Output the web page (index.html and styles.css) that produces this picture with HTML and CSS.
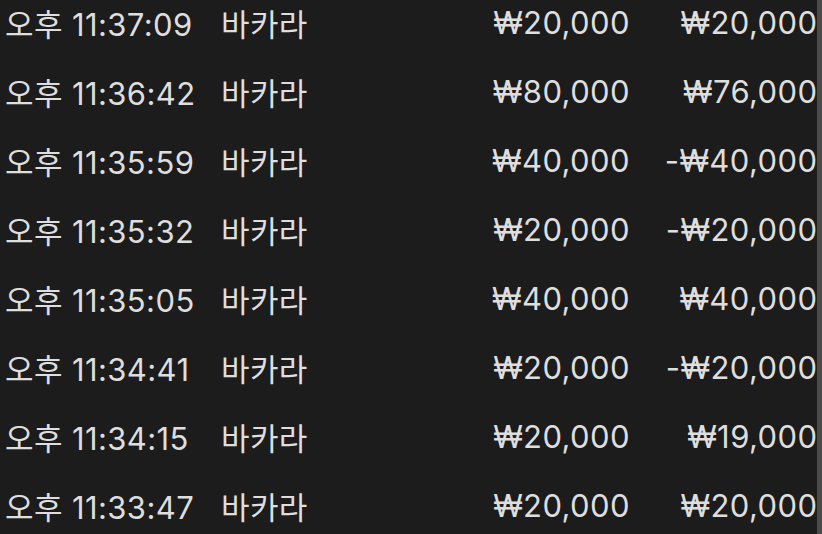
FILE: index.html
```html
<!DOCTYPE html>
<html lang="ko">
<head>
<meta charset="utf-8">
<link rel="stylesheet" href="styles.css">
</head>
<body>
<div class="screen">
  <div class="list">
    <div class="row"><span class="time">오후 11:37:09</span><span class="game">바카라</span><span class="bet">₩20,000</span><span class="win">₩20,000</span></div>
    <div class="row"><span class="time">오후 11:36:42</span><span class="game">바카라</span><span class="bet">₩80,000</span><span class="win">₩76,000</span></div>
    <div class="row"><span class="time">오후 11:35:59</span><span class="game">바카라</span><span class="bet">₩40,000</span><span class="win">-₩40,000</span></div>
    <div class="row"><span class="time">오후 11:35:32</span><span class="game">바카라</span><span class="bet">₩20,000</span><span class="win">-₩20,000</span></div>
    <div class="row"><span class="time">오후 11:35:05</span><span class="game">바카라</span><span class="bet">₩40,000</span><span class="win">₩40,000</span></div>
    <div class="row"><span class="time">오후 11:34:41</span><span class="game">바카라</span><span class="bet">₩20,000</span><span class="win">-₩20,000</span></div>
    <div class="row"><span class="time">오후 11:34:15</span><span class="game">바카라</span><span class="bet">₩20,000</span><span class="win">₩19,000</span></div>
    <div class="row"><span class="time">오후 11:33:47</span><span class="game">바카라</span><span class="bet">₩20,000</span><span class="win">₩20,000</span></div>
  </div>
  <div class="scrollbar"></div>
</div>
</body>
</html>
```
FILE: styles.css
```css
html, body {
  margin: 0;
  padding: 0;
  background: #1c1c1c;
}
.screen {
  display: flex;
  width: 822px;
  height: 534px;
  overflow: hidden;
}
.list {
  flex: 1;
  margin-top: -12px;
  padding-left: 5px;
  font-family: "Inter", "Noto Sans CJK KR", sans-serif;
  font-size: 31px;
  letter-spacing: 0.4px;
  color: #dedede;
}
.row {
  display: grid;
  grid-template-columns: 216px 1fr 200px 187px;
  align-items: center;
  height: 69px;
  white-space: nowrap;
}
.bet, .win {
  text-align: right;
}
.win {
  margin-right: -0.4px;
}
.scrollbar {
  width: 5px;
  background: #4a4a4a;
}
```
